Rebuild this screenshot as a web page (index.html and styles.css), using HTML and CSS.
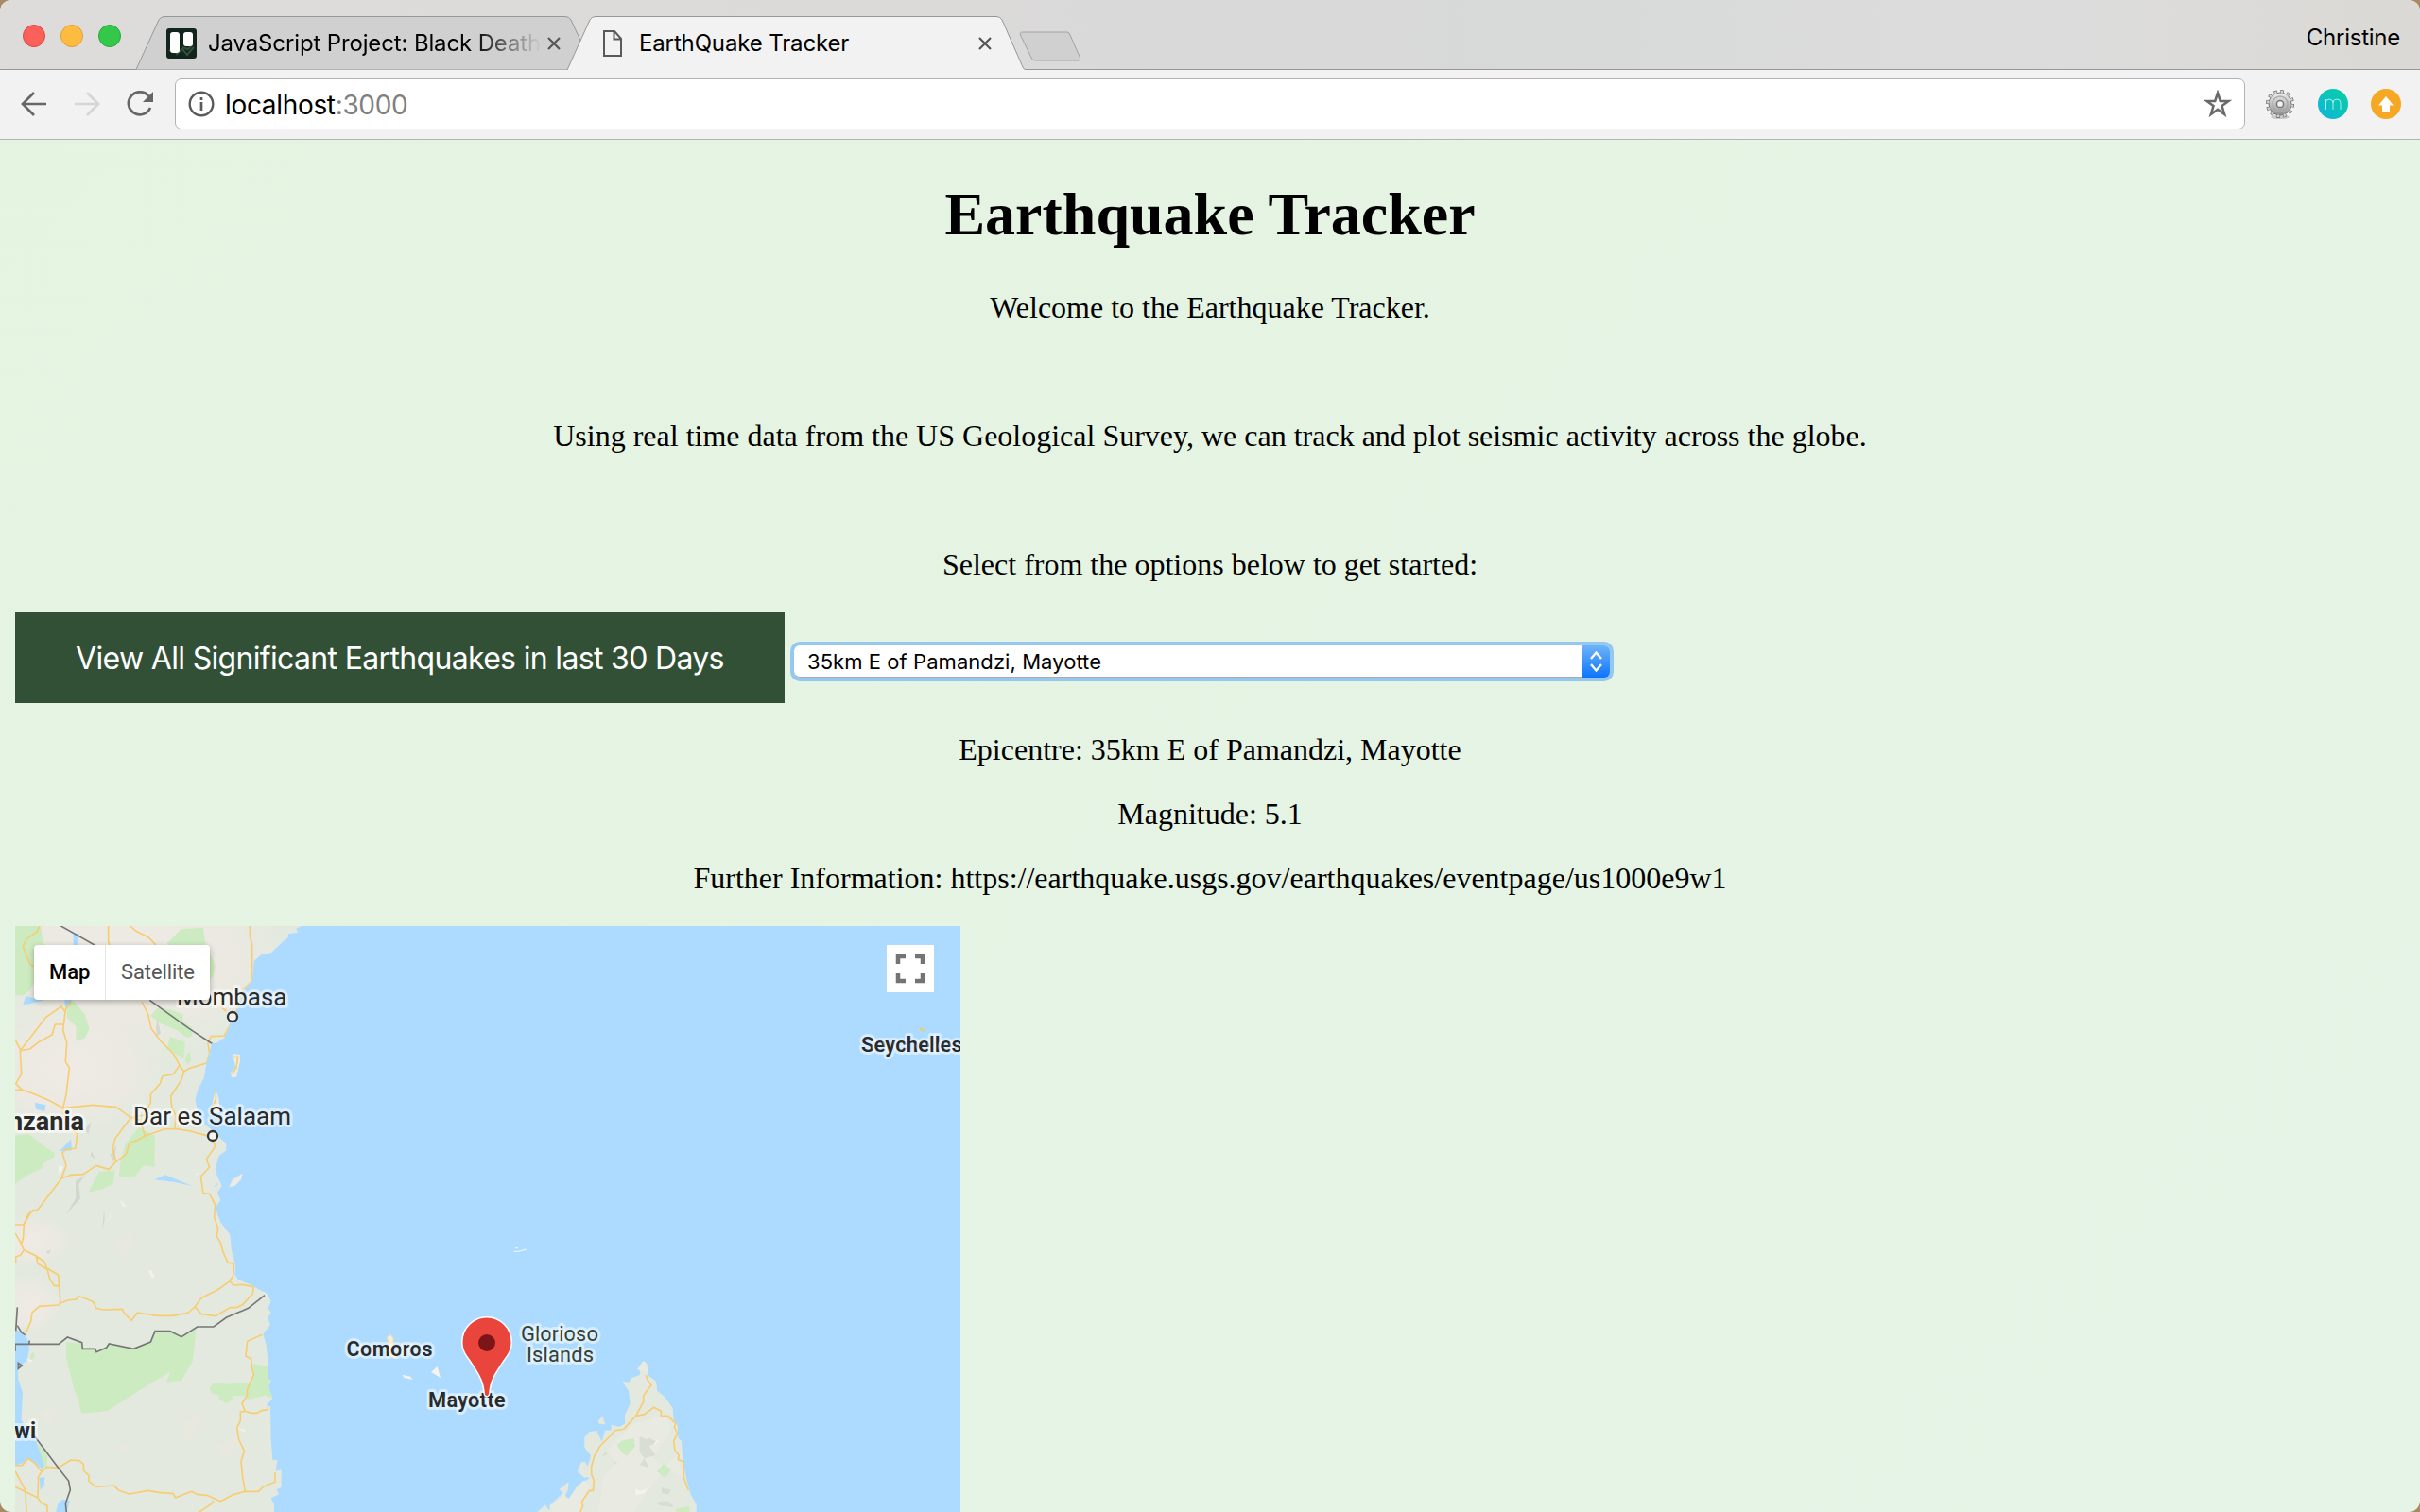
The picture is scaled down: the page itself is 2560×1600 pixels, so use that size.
FILE: index.html
```html
<!DOCTYPE html>
<html lang="en">
<head>
<meta charset="utf-8">
<title>EarthQuake Tracker</title>
<link rel="stylesheet" href="styles.css">
</head>
<body>
<div class="window">
  <header class="tabstrip">
    <div class="lights"><i class="light red"></i><i class="light amber"></i><i class="light green"></i></div>
    <div class="tab">
      <svg class="tab-shape" viewBox="0 0 484 74"><path d="M0 73.5 L24 21 Q26 17.5 30 17.5 H454 Q458 17.5 460 21 L484 73.5" fill="#d0d0d0" stroke="#979797"/></svg>
      <svg class="favicon" viewBox="0 0 32 32"><rect width="32" height="32" rx="3" fill="#12251c"/><path d="M3 24l5-4 3 7 6-5 5 6 7-8M17 20l6 2 5-5" stroke="#31513a" fill="none" stroke-width="2"/><rect x="4" y="4" width="10" height="22" rx="3" fill="#fff"/><rect x="18" y="4" width="10" height="15" rx="3" fill="#fff"/></svg>
      <span class="tab-title faded">JavaScript Project: Black Death</span>
      <svg class="close" viewBox="0 0 14 14"><path d="M1 1l12 12M13 1L1 13"/></svg>
    </div>
    <div class="tab active">
      <svg class="tab-shape" viewBox="0 0 484 74"><path d="M0 74 L24 21 Q26 17.5 30 17.5 H454 Q458 17.5 460 21 L482 71 Q483 73.500 485 73.500V75H0z" fill="#f2f2f2"/><path d="M0 74 L24 21 Q26 17.5 30 17.5 H454 Q458 17.5 460 21 L482 71 Q483 73.500 485 73.500" fill="none" stroke="#979797"/></svg>
      <svg class="page-icon" viewBox="0 0 20 28"><path d="M1 1H12L19 9V27H1zM11.500 1V9.500H19" fill="none" stroke="#5a5a5a" stroke-width="2"/></svg>
      <span class="tab-title">EarthQuake Tracker</span>
      <svg class="close" viewBox="0 0 14 14"><path d="M1 1l12 12M13 1L1 13"/></svg>
    </div>
    <svg class="newtab" viewBox="0 0 66 32"><path d="M4 1H51Q53 1 54 4L64.500 28Q65.500 31 63 31H17Q14 31 13 28L1.500 4Q.500 1 4 1z" fill="#d0d0d0" stroke="#a2a2a2"/></svg>
    <span class="profile">Christine</span>
  </header>
  <nav class="toolbar">
    <svg class="nav-icon" viewBox="0 0 28 28"><path d="M14 2L2 14L14 26M2 14H27" fill="none" stroke="#666" stroke-width="2.700"/></svg>
    <svg class="nav-icon" viewBox="0 0 28 28"><path d="M14 2L26 14L14 26M26 14H1" fill="none" stroke="#d6d6d6" stroke-width="2.700"/></svg>
    <svg class="nav-icon" viewBox="0 0 28 28"><path d="M23.500 6A12 12 0 1 0 25 18" fill="none" stroke="#666" stroke-width="2.800"/><path d="M28 1V12H17z" fill="#666"/></svg>
    <div class="omnibox">
      <svg class="info" viewBox="0 0 28 28"><circle cx="14" cy="14" r="12.300" fill="none" stroke="#5a5a5a" stroke-width="2.400"/><path d="M14 12V21M14 7V10" stroke="#5a5a5a" stroke-width="2.700"/></svg>
      <span class="url">localhost<span class="port">:3000</span></span>
      <svg class="star" viewBox="0 0 30 30"><path d="M15 3.500L17.800 12H26.500L19.500 17L22.100 26L15 20.800L7.900 26L10.500 17L3.500 12H12.200z" fill="none" stroke="#6a6a6a" stroke-width="2.600"/></svg>
    </div>
    <svg class="ext" viewBox="0 0 32 32">
      <defs><linearGradient id="metal" x2="0" y2="1"><stop stop-color="#f1f1f1"/><stop offset="1" stop-color="#8f8f8f"/></linearGradient><linearGradient id="teal" x1="1" x2="0" y2="1"><stop stop-color="#06d0a0"/><stop offset="1" stop-color="#10b4dc"/></linearGradient></defs>
      <ellipse cx="16" cy="30" rx="10" ry="2" fill="#aaa" opacity=".6"/>
      <circle cx="16" cy="16" r="13" fill="none" stroke="#666" stroke-width="4" stroke-dasharray="3.400 3.407"/>
      <circle cx="16" cy="16" r="12" fill="url(#metal)" stroke="#777"/><circle cx="16" cy="16" r="13" fill="none" stroke="#d2d2d2" stroke-width="2.700" stroke-dasharray="2.400 4.407" stroke-dashoffset="-.5"/>
      <circle cx="16" cy="16" r="8" fill="none" stroke="#aaa" stroke-width="1.500"/><circle cx="16" cy="16" r="3.600" fill="#f2f2f2" stroke="#777" stroke-width="1.500"/>
    </svg>
    <svg class="ext" viewBox="0 0 32 32"><circle cx="16" cy="16" r="16" fill="url(#teal)"/><path d="M8.500 22V11M8.500 14Q9 11 12 11Q16 11 16 15V22M16 15Q16 11 20 11Q24 11 24 15V22" fill="none" stroke="#a9edea"/></svg>
    <svg class="ext" viewBox="0 0 32 32"><circle cx="16" cy="16" r="16" fill="#f6a723"/><path d="M16 8L24 17.500H20V24H12V17.500H8z" fill="#fff"/></svg>
  </nav>
  <main class="page">
    <h1>Earthquake Tracker</h1>
    <p class="intro">Welcome to the Earthquake Tracker.</p>
    <p class="intro">Using real time data from the US Geological Survey, we can track and plot seismic activity across the globe.</p>
    <p>Select from the options below to get started:</p>
    <div class="controls">
      <button class="view-all">View All Significant Earthquakes in last 30 Days</button>
      <div class="select"><span class="value">35km E of Pamandzi, Mayotte</span>
        <svg class="stepper" viewBox="0 0 29 34"><path d="M9 14L14.500 7.500L20 14M9 20L14.500 26.500L20 20" fill="none" stroke="#fff" stroke-width="2.400"/></svg></div>
    </div>
    <p>Epicentre: 35km E of Pamandzi, Mayotte</p>
    <p>Magnitude: 5.1</p>
    <p>Further Information: https://earthquake.usgs.gov/earthquakes/eventpage/us1000e9w1</p>
    <div class="map">
      <svg class="tiles" viewBox="16 980 1000 620">
        <defs>
          <radialGradient id="dry"><stop stop-color="#efeae4"/><stop offset=".6" stop-color="#eee9e3" stop-opacity=".75"/><stop offset="1" stop-color="#e6eae0" stop-opacity="0"/></radialGradient>
          <clipPath id="mainland"><path d="M40 55H968L940 68L945 80L915 85V95L892 115L860 145L830 150L806 170L800 235L770 265L755 320L735 350L725 385L712 415L690 430L672 432L662 475L655 495L648 540L628 580L620 610L625 640L650 690L680 712L700 735L718 750L718 772L695 790L683 830L688 850L704 885L690 905L700 930L685 950L690 975L700 1000L730 1040L735 1090L748 1140L745 1165L755 1182L800 1200L815 1210L845 1225L860 1250L850 1275L860 1285L850 1305L858 1325L835 1355L845 1390L850 1440L848 1500L862 1500L852 1520L865 1560L845 1580L858 1585L860 1690L865 1755H880L875 1790L893 1786V1842L878 1848L885 1864L860 1876L870 1896V1940H40z"/></clipPath>
        </defs>
        <rect x="16" y="980" width="1000" height="620" fill="#acdbff"/>
        <g transform="translate(0 960) scale(.33333)">
          <g clip-path="url(#mainland)">
            <rect x="40" y="50" width="930" height="1900" fill="#e3e9df"/>
            <ellipse cx="420" cy="170" rx="540" ry="330" fill="url(#dry)"/>
            <ellipse cx="220" cy="510" rx="340" ry="220" fill="url(#dry)"/>
            <ellipse cx="90" cy="1260" rx="110" ry="100" fill="url(#dry)"/>
            <ellipse cx="90" cy="1060" rx="150" ry="90" fill="url(#dry)"/>
            <path d="M370 1070L410 1035L422 1068L390 1125L388 1090L365 1085zM590 1640L645 1590L640 1630L605 1695H590L583 1645zM695 1710L770 1670L745 1730L700 1750zM380 1720L400 1698L413 1722L385 1732zM130 1600L190 1590L155 1650z" fill="#e8e8df"/>
            <g fill="#cdebc0">
              <path d="M40 55H130L137 130L128 200L95 265L75 280H40zM530 115L575 70L645 65L650 105L668 150L683 185L676 220L655 240L600 220L560 150zM215 300H235L270 340L283 385L270 415L240 425L242 380L212 350zM477 345L500 320L540 325L580 340L580 360L610 385V410L595 415L560 390L510 370zM530 450L540 410L587 428L583 480L555 465zM590 470L603 458L607 485L597 500L587 490zM398 750L440 700L492 725L490 825L455 820L425 858L377 855L382 810zM48 725L90 720L150 765L173 780V792L135 815V828L90 850L48 878zM315 840L365 835L358 880L325 895L280 905z"/>
              <path d="M210 1380L260 1385L262 1402H302L306 1412L338 1398L346 1386L424 1402L478 1380L492 1346H540L576 1364L623 1335L612 1440L576 1503L528 1508L540 1475L440 1535L340 1600L258 1607L250 1570L235 1530L210 1432zM665 1528L675 1510L720 1514L790 1508L785 1552H740L738 1564L720 1576L695 1562V1550L670 1542zM803 1450L850 1458V1490L862 1500L852 1515L865 1560L840 1550L785 1563L783 1535L805 1490zM120 1700L150 1740V1776L140 1780L125 1735zM105 1410L112 1425L100 1437L95 1425z"/>
            </g>
            <g fill="#acdbff">
              <path d="M232 85H252L245 120H233zM72 312L82 282L112 290L140 275L150 292zM205 295H230L207 318zM110 620L145 628L142 648L115 642zM188 775L225 737L228 772zM490 865L525 850L610 885L555 873zM678 888L692 872L688 885z"/>
              <path d="M45 1320L52 1340L80 1358L92 1380V1410L85 1440L58 1462V1500L72 1540L68 1630L110 1680L140 1770L138 1785L122 1775L92 1750L72 1765L45 1775zM125 1812L142 1810L140 1835L128 1850zM175 1930L185 1890L200 1880L222 1885L208 1930z"/>
            </g>
            <path d="M495 380L500 355L510 400L498 410zM290 680L270 705L280 720zM290 775L303 800L288 790zM270 850L240 870V925L210 975L255 925L250 880zM350 785L370 755L360 810zM145 1095L163 1087L155 1100zM330 960L325 1025L332 990z" fill="#cbd0c8" opacity=".7"/>
            <path d="M185 820L202 825L188 850zM380 930L402 950H390zM345 1000L350 970V985zM618 850L636 838L625 850zM472 1155L480 1152L490 1172L483 1178zM753 1652L778 1660V1668zM85 1435L105 1438L95 1445z" fill="#f3f3ee"/>
            <g fill="none" stroke="#f7cd72" stroke-width="5" stroke-linejoin="round">
              <path d="M125 60L118 78L85 100L73 125L95 180L110 190M344 60V110L350 125M413 60L430 75L470 95L495 120M793 60V90L800 120V235L770 262L755 320L730 375L712 408L670 410L660 432L665 465L655 495L600 512L584 522L570 502L550 465L510 425L480 385L470 340L450 300M700 315L718 330M225 300L208 325L200 390L212 430L208 490L220 510L210 595L200 638L160 615L105 592L70 580L50 560L68 530L64 455L145 350L195 315L205 330M48 420L66 455L95 450L120 430L165 405L175 372H203M48 580H75M200 638L295 628L370 635L415 668L365 735L358 765L368 808L345 832L305 820L265 848L225 850L195 862L210 820L198 780L208 770L240 765L245 720L200 670V640M195 862L120 960L100 965L75 1008H48M570 502L550 530L515 537L508 560L478 595V620L458 660L415 668L445 675L460 726L520 705L555 703L600 710L655 725L675 735L683 760L655 800L665 825L637 855L645 908L665 910L683 945L680 985L692 1020L688 1045L700 1065L708 1095L722 1127L743 1133L740 1170L730 1185M584 522L575 550L542 600L545 635L558 660L555 703M460 726L440 738L410 750L400 785L368 808"/>
              <path d="M110 960L90 975L76 1005L74 1048L68 1070L76 1088L65 1105L50 1110V1130M48 1035L60 1055L68 1070M76 1088L115 1107L140 1125L148 1145L185 1167L192 1257L215 1248L240 1245L252 1235L295 1252L306 1273L328 1278L388 1276L397 1292L418 1312L436 1287L500 1297L550 1297L598 1287L618 1269L640 1240L690 1215L730 1187L740 1200L770 1198L805 1205L802 1227L770 1262L750 1271H730L683 1298L640 1292L618 1269M115 1107L120 1132L150 1150L158 1180L172 1202H188M192 1257L185 1263L125 1267L102 1287L98 1315L85 1345L70 1350M832 1357L785 1378L780 1425L797 1435L800 1465L805 1485L785 1530V1550L768 1575L778 1600L795 1606H815L830 1598L850 1595V1585M778 1600L763 1602V1630L752 1652L758 1690L775 1725L765 1760L770 1810L778 1855M48 1773L70 1772L90 1750L110 1765L132 1792L150 1777L185 1780L225 1755L252 1757L265 1768V1788L282 1805V1822L305 1840L362 1836L375 1850L410 1863L470 1852L505 1858L550 1862L557 1875L608 1855L625 1864L660 1868L700 1886L740 1865L778 1855H820L835 1840L873 1825V1795M48 1840L120 1875L122 1808L132 1792M48 1790L80 1850L85 1930M120 1875L130 1890L150 1900V1940M678 1884L670 1895L625 1925"/>
            </g>
            <path d="M190 58L300 120M475 295L600 385L676 435M48 1387H186L214 1365L260 1382L262 1402H302L306 1412L338 1398L346 1386L424 1402L478 1380L492 1346H540L576 1364L626 1332H678L718 1303L788 1273L840 1232M50 1345L55 1270M55 1328L68 1350L80 1358M92 1387L94 1376M48 1387V1410M110 1680L185 1780L218 1822L223 1850L208 1893L212 1930M58 1447L70 1455L58 1465z" fill="none" stroke="#777" stroke-width="5"/>
          </g>
          <path d="M738 465L762 468V490L750 540H735L732 525L748 510zM685 578L695 610L697 650L670 660L675 615zM727 888L738 865L770 845L765 865L745 885z" fill="#ecebe2"/>
          <path d="M742 475H755L750 510L738 528M685 578V610L672 640" fill="none" stroke="#f7cd72" stroke-width="5"/>
        </g>
        <g transform="translate(340 1280) scale(.33333)">
          <path d="M1022 480L1033 488L1038 515L1035 525L1062 545L1066 575L1090 595L1115 630L1118 670L1130 685L1132 725L1143 735L1147 800L1160 860L1172 905L1190 935V970H675L710 937L723 955L725 938L755 918L765 900L755 888L785 864L782 890L772 912L785 918L810 880L830 862L845 858L830 848L812 830L825 802L850 800L855 780L835 755V722L850 705L875 702L890 738L900 702L920 700V683L945 690L963 680V650L980 617L975 575L955 545L975 548L985 535L1010 525L1012 512L1003 506zM878 672L892 655L900 682L882 680z" fill="#e4e9df"/>
          <path d="M990 680L1090 650L1110 700L1050 790L1090 820L1125 780L1150 850L1090 820L990 960H880L895 850L935 800L910 760zM725 940L765 900L785 918L830 862L855 870L820 960H735zM1003 506L1022 480L1038 515L1012 512z" fill="#ebe9e2" opacity=".7"/>
          <path d="M830 853L845 849L850 855L835 858zM845 785L852 790L845 815L838 805zM870 708L890 706L880 712z" fill="#acdbff"/>
          <path d="M938 748L955 733L993 727L995 752L970 782L955 773zM1065 830L1085 808L1110 825L1090 852zM1123 950L1168 942V970H1130z" fill="#cdebc0"/>
          <path d="M1010 770L1025 790L1010 810L1040 820L1025 790L1060 780L1040 750L1070 740L1040 725L1060 700L1035 730L1010 720zM900 770L910 775L890 785zM1080 882L1110 890L1100 905L1080 900zM1060 930L1100 925L1120 945L1075 940zM930 800H940L925 812zM988 748L994 746V753z" fill="#cfd6cb" opacity=".6"/>
          <path d="M996 885L1010 893L1035 886L1025 900L998 908zM1050 750L1068 728L1070 738zM348 516L368 498L378 534zM257 524L283 530L290 540L262 534z" fill="#f4f3ec"/>
          <path d="M208 405L220 398L228 408V440L238 472L225 470L218 440z" fill="#f7eed5" stroke="#f4dda8" stroke-width="3"/>
          <path d="M610 133H625L650 126M615 122H624" stroke="#e5f2fb" stroke-width="4" fill="none"/>
          <path d="M1030 525L1034 540L1047 557L1022 590V610L998 655L975 680L960 697L930 702L915 720L885 750L867 780L857 815V840L865 860L862 892H850L825 930L830 940L820 965M998 655L1025 650L1055 628L1078 640V655H1100L1125 680L1120 690L1130 710L1118 735L1122 765L1135 780L1132 793L1150 802V850L1165 892" fill="none" stroke="#f7cd72" stroke-width="5"/>
        </g>
        <path d="M973 1088l2 2M976 1089l2 2" stroke="#f5c95f" stroke-width="2"/>
        <g class="labels">
          <text x="187" y="1064" font-size="26" textLength="116.500">Mombasa</text>
          <text x="141" y="1190" font-size="26" textLength="167">Dar es Salaam</text>
          <text x="89" y="1196" font-size="27" class="strong" text-anchor="end">Tanzania</text>
          <text x="38" y="1522" font-size="23" class="strong" text-anchor="end">Malawi</text>
          <text x="911" y="1113" font-size="22.500" class="mid" textLength="107">Seychelles</text>
          <text x="366.500" y="1435" font-size="22" class="mid" textLength="91">Comoros</text>
          <text x="453" y="1489" font-size="22" class="mid" textLength="81.500">Mayotte</text>
          <text x="551" y="1419" font-size="22" class="isle" textLength="82">Glorioso</text>
          <text x="557" y="1441" font-size="22" class="isle" textLength="71">Islands</text>
        </g>
        <g fill="#f3f3f0" stroke="#333" stroke-width="2.300"><circle cx="246" cy="1076" r="5"/><circle cx="225" cy="1202" r="5"/></g>
        <path d="M515 1477C513 1477 513 1475 512.500 1471C511 1460 507 1454 500 1443C494 1434 489.500 1430 489.500 1420A25.500 25.500 0 0 1 540.500 1420C540.500 1430 536 1434 530 1443C523 1454 519 1460 517.500 1471C517 1475 517 1477 515 1477z" fill="#ea453d" stroke="#fff" stroke-width="3" paint-order="stroke"/>
        <circle cx="515" cy="1421" r="9" fill="#7c1518"/>
      </svg>
      <div class="maptype"><span class="on">Map</span><span class="off">Satellite</span></div>
      <div class="fullscreen"><svg viewBox="0 0 50 50"><path d="M12 20V12H20M30 12H38V20M38 30V38H30M20 38H12V30" fill="none" stroke="#747474" stroke-width="4.500"/></svg></div>
    </div>
  </main>
</div>
</body>
</html>
```
FILE: styles.css
```css
* { box-sizing: border-box; }
html { background: #a68a62; }
body { margin: 0; height: 1600px; overflow: hidden; }
svg { display: block; flex: none; }
.window { height: 1600px; overflow: hidden; border-radius: 12px; background: linear-gradient(135deg, #e5f3e1, #e6f4e7); }

.tabstrip { display: flex; height: 74px; font: 24px Inter, sans-serif; letter-spacing: -.14px; color: #000; background: linear-gradient(90deg, #dddcda, #dad9d9 55%, #d7d9d8 60%, #dcdcdc 85%, #dbd9d5); box-shadow: inset 0 -1px #979797; }
.lights { display: flex; gap: 16px; padding: 26px 0 0 24px; width: 144px; }
.light { width: 24px; height: 24px; border-radius: 50%; border: 1px solid; }
.red { background: #fc605b; border-color: #e0443e; }
.amber { background: #fdbc40; border-color: #de9f34; }
.green { background: #34c84a; border-color: #24ab35; }
.tab { position: relative; display: flex; align-items: center; width: 484px; padding: 18px 35px 0 32px; }
.tab.active { margin-left: -28px; padding-left: 38px; }
.tab-shape { position: absolute; left: 0; top: 0; width: 484px; height: 74px; overflow: visible; }
.favicon { position: relative; width: 32px; height: 32px; margin-right: 12px; }
.page-icon { position: relative; width: 20px; height: 28px; margin-right: 18px; }
.tab-title { position: relative; flex: 1; overflow: hidden; white-space: nowrap; line-height: 32px; }
.faded { -webkit-mask-image: linear-gradient(90deg, #000 280px, transparent 352px); mask-image: linear-gradient(90deg, #000 280px, transparent 352px); }
.close { position: relative; width: 14px; height: 14px; stroke: #555; stroke-width: 2.2; }
.newtab { width: 66px; height: 32px; margin: 33px 0 0 -6px; }
.profile { margin: 24px 21px 0 auto; line-height: 32px; letter-spacing: -.25px; }

.toolbar { display: flex; align-items: center; height: 74px; padding: 0 20px 2px 22px; background: #f2f2f2; box-shadow: inset 0 -1px #b3b3b3; }
.nav-icon { width: 28px; height: 28px; margin-right: 28px; }
.nav-icon:nth-of-type(3) { margin-right: 23px; }
.omnibox { flex: 1; display: flex; align-items: center; height: 54px; margin-right: 21px; padding: 0 13px; background: #fff; border: 1px solid #b2b2b2; border-radius: 7px; font: 28px Inter, sans-serif; letter-spacing: -.33px; }
.info { width: 28px; height: 28px; margin-right: 11px; }
.url { flex: 1; padding-top: 2px; }
.port { color: #808080; }
.star { width: 30px; height: 30px; }
.ext { width: 32px; height: 32px; margin-right: 24px; }
.ext:last-child { margin-right: 0; }

.page { padding: 42px 16px 0; font: 32px/36px "Liberation Serif", serif; color: #000; }
h1 { margin: 0 0 43px; font-size: 64px; line-height: 74px; text-align: center; }
.page p { margin: 0 0 32px; text-align: center; }
.page p.intro { margin-bottom: 100px; }
.controls { display: flex; margin: 33px 0 31px; }
.view-all { width: 814px; height: 96px; padding: 0 0 0 64px; border: 0; background: #325035; color: #fff; font: 32px Inter, sans-serif; letter-spacing: -.67px; text-align: left; white-space: nowrap; }
.select { display: flex; width: 863px; height: 34px; margin: 35px 0 0 10px; border-radius: 6px; background: #fff; box-shadow: 0 0 0 4px #94c8f1, inset 0 -1px #aaa; font: 22px/34px Inter, sans-serif; letter-spacing: .06px; }
.value { flex: 1; padding-left: 14px; }
.stepper { width: 29px; height: 34px; border-radius: 0 6px 6px 0; background: linear-gradient(#6db3f8, #0d75fd); }

.map { position: relative; width: 1000px; height: 620px; margin-top: 33px; overflow: hidden; }
.tiles { width: 1000px; height: 620px; }
.labels { font-family: Roboto, sans-serif; fill: #2a2a2a; stroke: #fff; stroke-opacity: .5; stroke-width: 6px; stroke-linejoin: round; paint-order: stroke; }
.mid { font-weight: 600; }
.strong { font-weight: 700; }
.isle { fill: #37402f; }
.maptype { position: absolute; left: 20px; top: 20px; display: flex; height: 58px; border-radius: 4px; background: #fff; box-shadow: 0 2px 6px rgba(0,0,0,.3); font: 22px/58px Roboto, sans-serif; }
.on { width: 76px; padding-left: 16px; font-weight: 500; border-right: 1px solid #e6e6e6; }
.off { width: 110px; padding-left: 16px; color: #565656; letter-spacing: -.1px; }
.fullscreen { position: absolute; left: 922px; top: 20px; width: 50px; height: 50px; background: #fff; }
```
